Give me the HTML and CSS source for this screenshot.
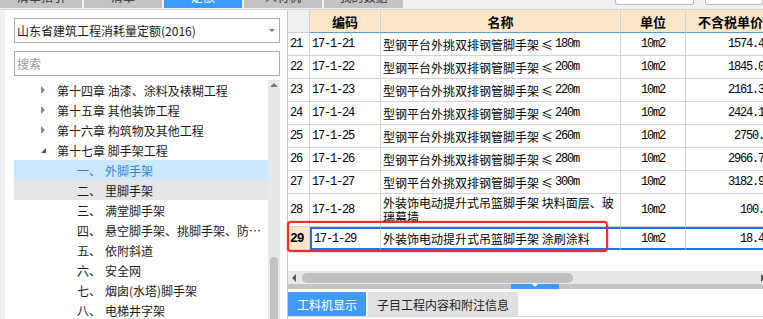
FILE: index.html
```html
<!DOCTYPE html>
<html lang="zh-CN">
    <head>
        <meta charset="utf-8" />
        <title>定额</title>
        <link rel="stylesheet" href="styles.css">
    </head>
    <body>
        <div class="topbar">
            <div class="tabs">
                <div class="tab tab-first"><span>清单指引</span></div>
                <div class="tab"><span>清单</span></div>
                <div class="tab tab-on"><span>定额</span></div>
                <div class="tab"><span>人材机</span></div>
                <div class="tab tab-last"><span>我的数据</span></div>
            </div>
            <div class="top-inputs">
                <div class="top-box box-a"></div>
                <div class="top-box box-b"></div>
            </div>
        </div>

        <div class="main">
            <div class="left">
                <div class="select">山东省建筑工程消耗量定额(2016)<i class="caret"></i></div>
                <div class="search">搜索</div>
                <div class="tree-wrap">
                    <ul class="tree">
                        <li class="chap"><i class="tri"></i>第十四章 油漆、涂料及裱糊工程</li>
                        <li class="chap"><i class="tri"></i>第十五章 其他装饰工程</li>
                        <li class="chap"><i class="tri"></i>第十六章 构筑物及其他工程</li>
                        <li class="chap open"><i class="tri"></i>第十七章 脚手架工程</li>
                        <li class="item sel"><span class="no">一、</span><span class="nm">外脚手架</span></li>
                        <li class="item hov"><span class="no">二、</span><span class="nm">里脚手架</span></li>
                        <li class="item"><span class="no">三、</span><span class="nm">满堂脚手架</span></li>
                        <li class="item"><span class="no">四、</span><span class="nm">悬空脚手架、挑脚手架、防护架</span></li>
                        <li class="item"><span class="no">五、</span><span class="nm">依附斜道</span></li>
                        <li class="item"><span class="no">六、</span><span class="nm">安全网</span></li>
                        <li class="item"><span class="no">七、</span><span class="nm">烟囱(水塔)脚手架</span></li>
                        <li class="item"><span class="no">八、</span><span class="nm">电梯井字架</span></li>
                    </ul>
                    <div class="vscroll"><i class="up"></i><div class="vthumb"></div></div>
                </div>
            </div>

            <div class="right">
                <div class="grid">
                    <div class="row head">
                        <div class="c"></div><div class="c">编码</div><div class="c">名称</div><div class="c">单位</div><div class="c">不含税单价</div>
                    </div>
                    <div class="row">
                        <div class="c rn">21</div><div class="c code">17-1-21</div><div class="c name">型钢平台外挑双排钢管脚手架<span class="le">≤</span><span class="m">180m</span></div><div class="c unit">10m2</div><div class="c price">1574.4</div>
                    </div>
                    <div class="row">
                        <div class="c rn">22</div><div class="c code">17-1-22</div><div class="c name">型钢平台外挑双排钢管脚手架<span class="le">≤</span><span class="m">200m</span></div><div class="c unit">10m2</div><div class="c price">1845.0</div>
                    </div>
                    <div class="row">
                        <div class="c rn">23</div><div class="c code">17-1-23</div><div class="c name">型钢平台外挑双排钢管脚手架<span class="le">≤</span><span class="m">220m</span></div><div class="c unit">10m2</div><div class="c price">2161.3</div>
                    </div>
                    <div class="row">
                        <div class="c rn">24</div><div class="c code">17-1-24</div><div class="c name">型钢平台外挑双排钢管脚手架<span class="le">≤</span><span class="m">240m</span></div><div class="c unit">10m2</div><div class="c price">2424.1</div>
                    </div>
                    <div class="row">
                        <div class="c rn">25</div><div class="c code">17-1-25</div><div class="c name">型钢平台外挑双排钢管脚手架<span class="le">≤</span><span class="m">260m</span></div><div class="c unit">10m2</div><div class="c price">2750.</div>
                    </div>
                    <div class="row">
                        <div class="c rn">26</div><div class="c code">17-1-26</div><div class="c name">型钢平台外挑双排钢管脚手架<span class="le">≤</span><span class="m">280m</span></div><div class="c unit">10m2</div><div class="c price">2966.7</div>
                    </div>
                    <div class="row">
                        <div class="c rn">27</div><div class="c code">17-1-27</div><div class="c name">型钢平台外挑双排钢管脚手架<span class="le">≤</span><span class="m">300m</span></div><div class="c unit">10m2</div><div class="c price">3182.9</div>
                    </div>
                    <div class="row tall">
                        <div class="c rn">28</div><div class="c code">17-1-28</div><div class="c name">外装饰电动提升式吊篮脚手架 块料面层、玻璃幕墙</div><div class="c unit">10m2</div><div class="c price">100.</div>
                    </div>
                    <div class="row cur">
                        <div class="c rn">29</div><div class="c code">17-1-29</div><div class="c name">外装饰电动提升式吊篮脚手架 涂刷涂料</div><div class="c unit">10m2</div><div class="c price">18.4</div>
                    </div>
                </div>

                <div class="hscroll">
                    <i class="arr-l"></i>
                    <div class="hthumb"></div>
                    <i class="arr-r"></i>
                </div>
                <div class="splitter"><div class="grip"><i></i></div></div>
                <div class="btabs">
                    <div class="btab on">工料机显示</div>
                    <div class="btab">子目工程内容和附注信息</div>
                </div>

                <div class="mark"></div>
            </div>
        </div>
    </body>
</html>
```

FILE: styles.css
```css
body {
    margin: 0;
    width: 763px;
    height: 319px;
    overflow: hidden;
    background-color: #f0f0f0;
    font-family: "Noto Sans CJK SC", "Noto Sans", sans-serif;
    font-size: 12px;
    color: #1a1a1a;
}

/* top tabs, only their lower edge is in view */
.topbar {
    display: flex;
    height: 9px;
    border-bottom: 1px solid #d6d6d6;
}
.tabs {
    display: flex;
    gap: 2px;
    height: 8px;
}
.tab {
    width: 78px;
    height: 8px;
    overflow: hidden;
    background-color: #c3c3c3;
    color: #333;
    text-align: center;
}
.tab span {
    display: block;
    line-height: 14px;
    margin-top: -10px;
}
.tab-first {
    width: 82px;
}
.tab-last {
    width: 79px;
}
.tab-on {
    background-color: #3c9bff;
    color: #fff;
}
.top-inputs {
    display: flex;
    gap: 11px;
    margin-left: auto;
}
.top-box {
    height: 4px;
    background-color: #fff;
    border: 1px solid #b9b9b9;
    border-top: none;
    border-radius: 0 0 3px 3px;
}
.box-a {
    width: 77px;
}
.box-b {
    width: 56px;
}

.main {
    display: flex;
    height: 309px;
}

/* left side: library picker and chapter tree */
.left {
    width: 283px;
    margin-left: 5px;
    padding: 8px 7px 0 9px;
    box-sizing: border-box;
    background-color: #fff;
    border-right: 1px solid #c8c8c8;
    display: flex;
    flex-direction: column;
}
.select, .search {
    height: 25px;
    box-sizing: border-box;
    border: 1px solid #ababab;
    padding-left: 2px;
    display: flex;
    align-items: center;
}
.caret {
    margin-left: auto;
    margin-right: 4px;
    width: 0;
    height: 0;
    border-left: 3px solid transparent;
    border-right: 3px solid transparent;
    border-top: 3px solid #777;
}
.search {
    margin-top: 8px;
    color: #9a9a9a;
}
.tree-wrap {
    display: flex;
    flex: 1;
    min-height: 0;
    margin-top: 4px;
}
.tree {
    list-style: none;
    margin: 0;
    padding: 0;
    width: 254px;
    overflow: hidden;
}
.tree li {
    height: 20px;
    display: flex;
    align-items: center;
    white-space: nowrap;
    overflow: hidden;
}
.chap {
    padding-left: 27px;
}
.tri {
    width: 0;
    height: 0;
    border-top: 4px solid transparent;
    border-bottom: 4px solid transparent;
    border-left: 4px solid #8a8a8a;
    margin-right: 12px;
}
.open .tri {
    border-top: none;
    border-left: 5px solid transparent;
    border-bottom: 5px solid #555;
    margin-right: 11px;
}
.item {
    padding-left: 63px;
}
.item .no {
    width: 28px;
    flex: none;
}
.item .nm {
    overflow: hidden;
    text-overflow: ellipsis;
    padding-right: 5px;
}
.sel {
    background-color: #cce8ff;
    color: #2f86e0;
}
.hov {
    background-color: #e5e5e5;
}
.vscroll {
    width: 12px;
    background-color: #e8e8e8;
    display: flex;
    flex-direction: column;
    align-items: center;
}
.up {
    margin-top: 3px;
    width: 0;
    height: 0;
    border-left: 4px solid transparent;
    border-right: 4px solid transparent;
    border-bottom: 4px solid #7a7a7a;
}
.vthumb {
    margin-top: auto;
    width: 8px;
    height: 62px;
    background-color: #c2c2c2;
    border-radius: 4px 4px 0 0;
}

/* right side: quota grid */
.right {
    flex: 1;
    min-width: 0;
    position: relative;
    background-color: #fff;
    display: flex;
    flex-direction: column;
}
.grid {
    height: 261px;
    overflow: hidden;
}
.row {
    display: grid;
    grid-template-columns: 22px 71px 240px 65px 90px;
    height: 23px;
}
.c {
    box-sizing: border-box;
    border-right: 1px solid #d2d2d2;
    border-bottom: 1px solid #d2d2d2;
    display: flex;
    align-items: center;
    overflow: hidden;
    white-space: nowrap;
    color: #000;
}
.head .c {
    background-color: #fde7c8;
    border-bottom-color: #5b9bd5;
    justify-content: center;
    font-size: 13px;
    font-weight: bold;
}
.head .c:first-child {
    background-color: #f0f0f0;
    border-bottom-color: #d2d2d2;
}
.rn, .code, .unit, .price, .m {
    font-family: "Liberation Mono", monospace;
    font-size: 12px;
    letter-spacing: -1.2px;
}
.le {
    padding: 0 2px;
}
.rn, .code, .name {
    padding-left: 2px;
}
.unit {
    justify-content: center;
}
.price {
    justify-content: flex-end;
    padding-right: 11px;
}
.tall {
    height: 33px;
}
.tall .name {
    white-space: normal;
    align-items: flex-start;
    line-height: 14px;
    padding-top: 2px;
}
.cur .rn {
    background-color: #fde7c8;
    font-weight: bold;
    font-size: 13px;
    letter-spacing: -1px;
}
.cur .c + .c {
    border-top: 2px solid #1f6fef;
    border-bottom: 2px solid #1f6fef;
}
.cur .code {
    border-left: 2px solid #1f6fef;
}

.hscroll {
    height: 13px;
    background-color: #e8e8e8;
    display: flex;
    align-items: center;
    overflow: hidden;
}
.arr-l {
    margin-left: 4px;
    width: 0;
    height: 0;
    border-top: 4px solid transparent;
    border-bottom: 4px solid transparent;
    border-right: 4px solid #555;
}
.hthumb {
    margin-left: 6px;
    width: 271px;
    height: 10px;
    border-radius: 5px;
    background-color: #c0c0c0;
}
.arr-r {
    margin-left: auto;
    margin-right: -2px;
    width: 0;
    height: 0;
    border-top: 4px solid transparent;
    border-bottom: 4px solid transparent;
    border-left: 4px solid #555;
}
.splitter {
    height: 5px;
    background-color: #c4c4c4;
    display: flex;
}
.grip {
    margin-left: 223px;
    width: 48px;
    background-color: #3c9bff;
    display: flex;
    justify-content: center;
}
.grip i {
    width: 0;
    height: 0;
    border-left: 3px solid transparent;
    border-right: 3px solid transparent;
    border-top: 3px solid #fff;
}
.btabs {
    margin-top: 3px;
    height: 24px;
    display: flex;
    gap: 2px;
    border-bottom: 1px solid #d8d8d8;
}
.btab {
    padding: 0 9px;
    display: flex;
    align-items: center;
    background-color: #e1e1e1;
    color: #222;
}
.btab.on {
    background-color: #3f9bff;
    color: #fff;
}

/* red annotation frame */
.mark {
    position: absolute;
    left: -1px;
    top: 211px;
    width: 321px;
    height: 31px;
    box-sizing: border-box;
    border: 2px solid #e8302a;
    border-radius: 4px;
    box-shadow: 0 0 2px rgba(230, 40, 40, 0.6);
}
```
